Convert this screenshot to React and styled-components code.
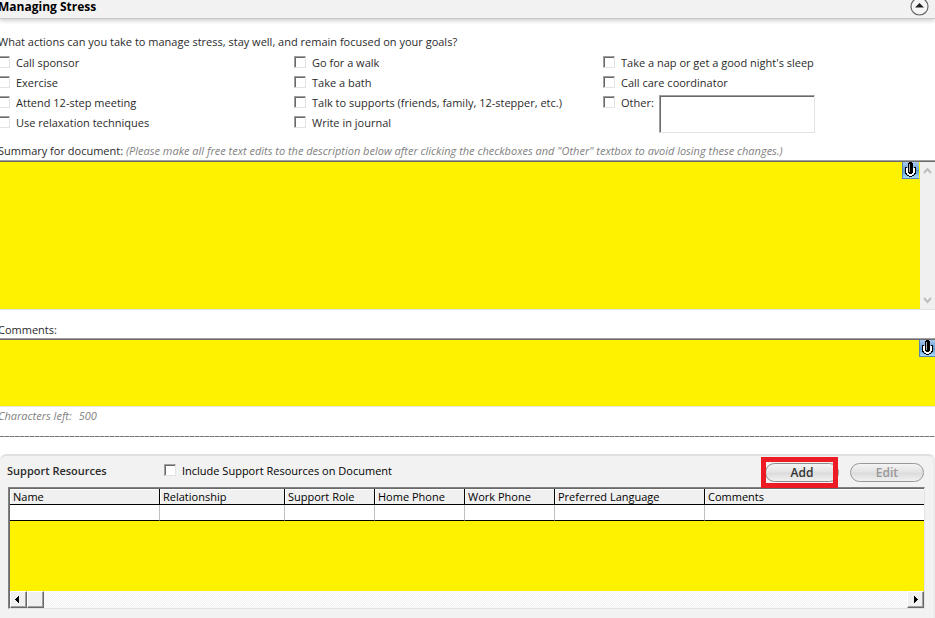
import React from "react";
import styled, { createGlobalStyle, css } from "styled-components";

const YELLOW = "#fff200";

const GlobalStyle = createGlobalStyle`
  * { box-sizing: border-box; }
  body {
    margin: 0;
    background: #fff;
    color: #2b2b2b;
    font: 11px/16px "Open Sans", "Noto Sans", sans-serif;
    overflow: hidden;
  }
  button, input, textarea { font: inherit; color: inherit; margin: 0; }
`;

const sunken = css`
  border: 1px solid;
  border-color: #a0a0a0 #e3e3e3 #e3e3e3 #a0a0a0;
  box-shadow: inset 1px 1px 0 #696969;
`;

const Page = styled.main`
  min-height: 100vh;
  overflow: hidden;
`;

const SectionHeader = styled.header`
  display: flex;
  align-items: center;
  justify-content: space-between;
  height: 19px;
  padding: 0 6px 5px 0;
  background: #f2f2f2;
  border-bottom: 1px solid #c8c8c8;
  box-shadow: 0 2px 4px rgba(0, 0, 0, 0.18);
`;

const SectionTitle = styled.h1`
  margin: 0 0 0 -2px;
  color: #000;
  font-size: 12px;
  line-height: 13px;
  font-weight: 700;
`;

const CollapseButton = styled.button`
  display: flex;
  padding: 0;
  border: 0;
  background: none;
`;

const Body = styled.div`
  margin-left: -2px;
`;

const Question = styled.p`
  margin: 0;
  padding-top: 15px;
`;

const Choices = styled.div`
  display: grid;
  grid-template-columns: 296px 309px 1fr;
  margin-top: 3px;
`;

const ChoiceColumn = styled.div`
  display: flex;
  flex-direction: column;
  align-items: flex-start;
`;

const CheckLabel = styled.label`
  display: flex;
  align-items: center;
  gap: 6px;
  height: 20px;
  white-space: nowrap;
  color: ${(p) => (p.$dark ? "#000" : "inherit")};
`;

const CheckBox = styled.input`
  appearance: none;
  flex: none;
  width: 12px;
  height: 12px;
  margin-bottom: 2px;
  background: #fff;
  ${sunken}
`;

const OtherRow = styled.div`
  display: flex;
  gap: 5px;
`;

const OtherInput = styled.textarea`
  display: block;
  width: 156px;
  height: 38px;
  margin-top: 2px;
  padding: 2px;
  resize: none;
  background: #fff;
  ${sunken}
`;

const FieldLabel = styled.label`
  display: block;
  height: 16px;
  margin-top: ${(p) => p.$space}px;
  white-space: nowrap;
`;

const Hint = styled.em`
  color: #7f7f7f;
`;

const Field = styled.div`
  position: relative;
  display: flex;
  height: ${(p) => p.$height}px;
  margin-top: ${(p) => p.$space}px;
  border-top: 1px solid #a0a0a0;
  border-bottom: 1px solid #e3e3e3;
`;

const TextBox = styled.textarea`
  flex: 1;
  min-width: 0;
  padding: 2px;
  border: 0;
  border-top: 1px solid #696969;
  border-radius: 0;
  resize: none;
  outline: none;
  background: ${YELLOW};
`;

const MicButton = styled.button`
  position: absolute;
  top: 1px;
  right: ${(p) => p.$right}px;
  width: 17px;
  height: 17px;
  padding: 0;
  border: 1px solid #5b83b0;
  border-width: 0 0 1px 1px;
  background: linear-gradient(#a9c9ea, #6fa5da 45%, #5a9ad6 55%, #a6daf8);
`;

const ScrollRail = styled.div`
  display: flex;
  flex-direction: column;
  justify-content: space-between;
  width: 15px;
  background: #f0f0f0;
  border-top: 1px solid #696969;
`;

const RailButton = styled.button`
  display: flex;
  align-items: center;
  justify-content: center;
  height: 17px;
  padding: 0;
  border: 0;
  background: none;
`;

const Counter = styled.p`
  display: flex;
  gap: 7px;
  margin: 1px 0 0;
  font-style: italic;
  color: #7f7f7f;
`;

const Divider = styled.hr`
  height: 1px;
  margin: 12px 0 17px;
  border: 0;
  background: repeating-linear-gradient(90deg, #777 0 4px, #b4b4b4 4px 5px);
`;

const Panel = styled.section`
  min-height: 172px;
  padding: 0 8px 10px 8px;
  background: #f2f2f2;
  border: 2px solid #e4e4e4;
  border-color: #e0e0e0 #ececec #ececec #f2f2f2;
  border-radius: 6px;
  border-left: 0;
`;

const PanelBar = styled.div`
  display: flex;
  align-items: center;
  height: 30px;
  margin-bottom: 1px;
`;

const PanelTitle = styled.h2`
  width: 157px;
  margin: 0 0 0 -1px;
  font-size: 11px;
  line-height: 16px;
  font-weight: 600;
`;

const PanelActions = styled.div`
  display: flex;
  gap: 11px;
  margin: 2px 1px 0 auto;
`;

const Highlight = styled.div`
  position: relative;
  &::after {
    content: "";
    position: absolute;
    inset: -6px 1px -6px -4px;
    border: 5px solid #ed1c24;
    pointer-events: none;
  }
`;

const PillButton = styled.button`
  display: block;
  width: 74px;
  height: 19px;
  padding: 0;
  border: 1px solid #8c8c8c;
  border-radius: 10px;
  background: linear-gradient(#f4f4f4, #e4e4e4 45%, #dcdcdc 55%, #f0f0f0);
  font-size: 12px;
  line-height: 17px;
  font-weight: 600;
  color: #333;
  &:disabled { color: #999; border-color: #999; }
`;

const Grid = styled.div`
  background: ${YELLOW};
  ${sunken}
  border-top-color: #808080;
  border-left-color: #808080;
  padding: 1px 0 0 1px;
`;

const Table = styled.table`
  width: 100%;
  border-collapse: separate;
  border-spacing: 0;
  table-layout: fixed;
  color: #000;
`;

const Heading = styled.th`
  width: ${(p) => (p.$width ? `${p.$width}px` : "auto")};
  height: 16px;
  padding: 0 3px;
  border: 0 solid #000;
  border-width: 0 1px 1px 0;
  background: #f0f0f0;
  box-shadow: inset 1px 1px 0 #fff;
  line-height: 15px;
  font-weight: 400;
  text-align: left;
  white-space: nowrap;
  &:last-child { border-right: 0; }
`;

const Cell = styled.td`
  height: 16px;
  padding: 0;
  background: #fff;
  border-right: 1px solid #c0c0c0;
  border-bottom: 1px solid #000;
  &:last-child { border-right: 0; }
`;

const ScrollTrack = styled.div`
  display: flex;
  height: 17px;
  margin-top: 70px;
  background: repeating-conic-gradient(#fff 0 25%, #f0f0f0 0 50%) 0 0 / 2px 2px;
`;

const TrackButton = styled.button`
  display: flex;
  align-items: center;
  justify-content: center;
  width: 17px;
  height: 17px;
  padding: 0;
  margin-left: ${(p) => (p.$end ? "auto" : 0)};
  border: 1px solid;
  border-color: #fff #696969 #696969 #fff;
  box-shadow: inset -1px -1px 0 #a0a0a0;
  background: #f0f0f0;
`;

const columns = [
  ["Name", 150],
  ["Relationship", 125],
  ["Support Role", 90],
  ["Home Phone", 90],
  ["Work Phone", 90],
  ["Preferred Language", 150],
  ["Comments"],
];

const choices = [
  ["Call sponsor", "Exercise", "Attend 12-step meeting", "Use relaxation techniques"],
  ["Go for a walk", "Take a bath", "Talk to supports (friends, family, 12-stepper, etc.)", "Write in journal"],
  ["Take a nap or get a good night's sleep", "Call care coordinator"],
];

function Choice({ text, dark }) {
  return (
    <CheckLabel $dark={dark}>
      <CheckBox type="checkbox" />
      {text}
    </CheckLabel>
  );
}

function Microphone({ label, right }) {
  return (
    <MicButton type="button" aria-label={label} $right={right}>
      <svg width="16" height="16" viewBox="1 0 16 16" shapeRendering="crispEdges">
        <path d="M4 6h9v6h-2v2H6v-2H4z" fill="#fff" />
        <path d="M7 0h3v1h1v10h-1v1H7v-1H6V1h1z" fill="#000" />
        <path d="M7 2h1v8H7z" fill="#aaa" />
        <path d="M3 5h2v1H4v5h1v2H4v-1H3zM12 5h2v7h-1v1h-1v-2h1V6h-1zM5 13h2v1h3v-1h2v1h-2v1H7v-1H5z" fill="#000" />
      </svg>
    </MicButton>
  );
}

function Chevron({ down }) {
  return (
    <svg width="9" height="7" viewBox="0 0 9 7">
      <path d={down ? "M1 1l3.5 4L8 1" : "M1 6l3.5-4L8 6"} fill="none" stroke="#bdbdbd" strokeWidth="2" />
    </svg>
  );
}

function Triangle({ right }) {
  return (
    <svg width="7" height="7" viewBox="0 0 7 7" shapeRendering="crispEdges">
      <path d={right ? "M2 0v7h1V6h1V5h1V4h1V3H5V2H4V1H3V0z" : "M4 0v7H3V6H2V5H1V4H0V3h1V2h1V1h1V0z"} fill="#000" />
    </svg>
  );
}

export default function App() {
  return (
    <Page>
      <GlobalStyle />
      <SectionHeader>
        <SectionTitle>Managing Stress</SectionTitle>
        <CollapseButton type="button" aria-label="Collapse section">
          <svg width="19" height="19" viewBox="0 0 19 19">
            <circle cx="9.5" cy="9.5" r="8.5" fill="#f6f6f6" stroke="#666" strokeWidth="1.2" />
            <path d="M5 10.5h9L9.5 6z" fill="#222" />
          </svg>
        </CollapseButton>
      </SectionHeader>

      <Body>
        <Question>
          What actions can you take to manage stress, stay well, and remain focused on your goals?
        </Question>
        <Choices>
          {choices.map((items, index) => (
            <ChoiceColumn key={index}>
              {items.map((text) => <Choice key={text} text={text} />)}
              {index === 2 && (
                <OtherRow>
                  <Choice text="Other:" />
                  <OtherInput aria-label="Other action" />
                </OtherRow>
              )}
            </ChoiceColumn>
          ))}
        </Choices>

        <FieldLabel htmlFor="summary" $space={10}>
          Summary for document:{" "}
          <Hint>
            (Please make all free text edits to the description below after clicking the checkboxes and "Other" textbox to avoid losing these changes.)
          </Hint>
        </FieldLabel>
        <Field $height={150} $space={1}>
          <TextBox id="summary" />
          <Microphone label="Dictate summary" right={16} />
          <ScrollRail>
            <RailButton type="button" aria-label="Scroll up"><Chevron /></RailButton>
            <RailButton type="button" aria-label="Scroll down"><Chevron down /></RailButton>
          </ScrollRail>
        </Field>

        <FieldLabel htmlFor="comments" $space={12}>Comments:</FieldLabel>
        <Field $height={69} $space={0}>
          <TextBox id="comments" />
          <Microphone label="Dictate comments" right={-1} />
        </Field>
        <Counter>
          <span>Characters left:</span>
          <span>500</span>
        </Counter>
      </Body>

      <Divider />

      <Panel>
        <PanelBar>
          <PanelTitle>Support Resources</PanelTitle>
          <Choice dark text="Include Support Resources on Document" />
          <PanelActions>
            <Highlight><PillButton type="button">Add</PillButton></Highlight>
            <PillButton type="button" disabled>Edit</PillButton>
          </PanelActions>
        </PanelBar>
        <Grid>
          <Table>
            <thead>
              <tr>
                {columns.map(([name, width]) => (
                  <Heading key={name} scope="col" $width={width}>{name}</Heading>
                ))}
              </tr>
            </thead>
            <tbody>
              <tr>{columns.map(([name]) => <Cell key={name} />)}</tr>
            </tbody>
          </Table>
          <ScrollTrack>
            <TrackButton type="button" aria-label="Scroll left"><Triangle /></TrackButton>
            <TrackButton type="button" aria-label="Scroll position" />
            <TrackButton type="button" aria-label="Scroll right" $end><Triangle right /></TrackButton>
          </ScrollTrack>
        </Grid>
      </Panel>
    </Page>
  );
}
